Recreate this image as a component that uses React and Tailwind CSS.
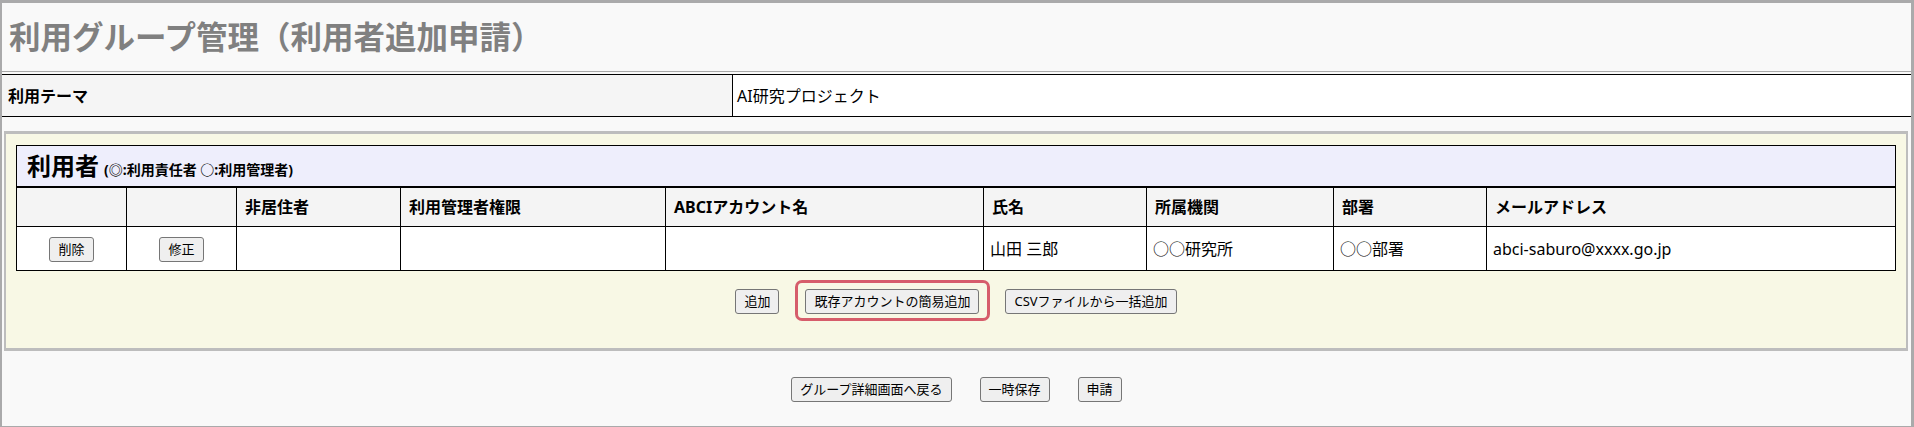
import React from 'react';

const Btn = ({ children }) => (
  <button
    type="button"
    className="bg-[#efefef] border border-[#767676] rounded-[3px] px-2 py-[3px] text-[13px] leading-[17px] text-black whitespace-nowrap"
  >
    {children}
  </button>
);

const cols = ['w-[110px]', 'w-[110px]', 'w-[164px]', 'w-[265px]', 'w-[318px]', 'w-[163px]', 'w-[187px]', 'w-[153px]', ''];

const headers = ['', '', '非居住者', '利用管理者権限', 'ABCIアカウント名', '氏名', '所属機関', '部署', 'メールアドレス'];

const App = () => {
  return (
    <div className="w-full bg-[#f9f9f9] border-t-[3px] border-l-2 border-r-[3px] border-b-2 border-[#aaaaab] font-['Noto_Sans','Noto_Sans_CJK_JP',sans-serif] text-black">
      {/* Title */}
      <div className="h-[69px] border-b border-[#a8a8a8] flex items-center pl-[7px]">
        <h1 className="text-[31.5px] leading-[40px] font-bold text-[#808080]">利用グループ管理（利用者追加申請）</h1>
      </div>

      {/* Theme row */}
      <div className="mt-[2px] flex h-[43px] border-y border-black">
        <div className="w-[731px] bg-[#f5f5f5] border-r border-black flex items-center pl-[6px] text-[16px] font-bold">利用テーマ</div>
        <div className="flex-1 bg-white flex items-center pl-[4px] text-[16px]">AI研究プロジェクト</div>
      </div>

      {/* Users panel */}
      <div className="mt-[14px] ml-[2px] mr-[3px] bg-[#f8f8e5] border-x-2 border-y-[3px] border-[#bdbdbd] px-[10px] pt-[11px] pb-[34px]">
        <table className="w-full border-collapse table-fixed">
          <colgroup>
            {cols.map((c, i) => (
              <col key={i} className={c} />
            ))}
          </colgroup>
          <thead>
            <tr className="h-[41px]">
              <th colSpan={9} className="bg-[#eeeefc] border border-black border-b-2 text-left pl-[10px] font-bold">
                <span className="text-[24px] leading-[30px]">利用者</span>
                <span className="text-[14px] ml-[5px]">(◎:利用責任者 ○:利用管理者)</span>
              </th>
            </tr>
            <tr className="h-[40px] bg-[#f4f4f4]">
              {headers.map((h, i) => (
                <th key={i} className="border border-black text-left px-2 text-[16px] font-bold">{h}</th>
              ))}
            </tr>
          </thead>
          <tbody>
            <tr className="h-[44px] bg-white text-[16px]">
              <td className="border border-black text-center"><Btn>削除</Btn></td>
              <td className="border border-black text-center"><Btn>修正</Btn></td>
              <td className="border border-black"></td>
              <td className="border border-black"></td>
              <td className="border border-black"></td>
              <td className="border border-black px-1.5">山田 三郎</td>
              <td className="border border-black px-1.5">○○研究所</td>
              <td className="border border-black px-1.5">○○部署</td>
              <td className="border border-black px-1.5">abci-saburo@xxxx.go.jp</td>
            </tr>
          </tbody>
        </table>

        <div className="mt-[17px] flex justify-center items-center gap-[26px]">
          <Btn>追加</Btn>
          <div className="relative">
            <Btn>既存アカウントの簡易追加</Btn>
            <div className="absolute -left-[10px] -right-[11px] -top-[8px] -bottom-[7px] border-[3px] border-[#d65d6b] rounded-[7px] pointer-events-none" />
          </div>
          <Btn>CSVファイルから一括追加</Btn>
        </div>
      </div>

      {/* Bottom actions */}
      <div className="pt-[26px] pb-[24px] flex justify-center items-center gap-[28px]">
        <Btn>グループ詳細画面へ戻る</Btn>
        <Btn>一時保存</Btn>
        <Btn>申請</Btn>
      </div>
    </div>
  );
};

export default App;
